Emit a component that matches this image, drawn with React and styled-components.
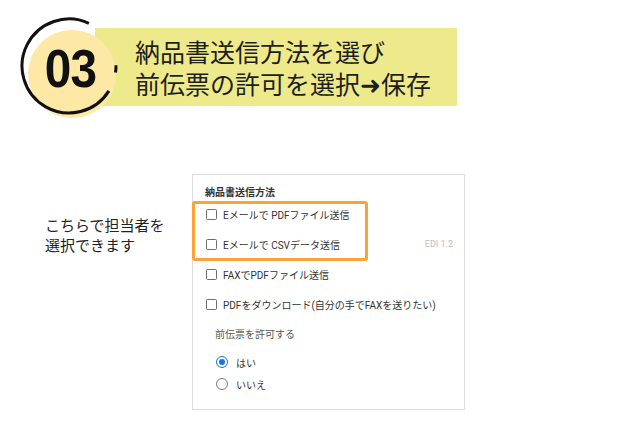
import styled, { createGlobalStyle } from "styled-components"

const GlobalStyle = createGlobalStyle`
    body {
        margin: 0;
        background: #fff;
        font-family: "Noto Sans CJK JP", "Noto Sans", sans-serif;
        color: #222;
    }
`

const App = () => {
    return (
        <Page>
            <GlobalStyle />
            <Header>
                <Badge>
                    <svg width="104" height="106" viewBox="0 0 104 106">
                        <circle cx="54" cy="59" r="44" fill="#fde8a6" />
                        <path d="M90.9 75.9 A47 47 0 1 1 70.9 8.4" fill="none" stroke="#111" strokeWidth="3" />
                        <path d="M98 50.2 A47 47 0 0 1 97.5 57.5" fill="none" stroke="#111" strokeWidth="3" />
                    </svg>
                    <Number>03</Number>
                </Badge>
                <Band>
                    納品書送信方法を選び<br />
                    前伝票の許可を選択➜保存
                </Band>
            </Header>
            <Body>
                <Note>
                    こちらで担当者を<br />
                    選択できます
                </Note>
                <Card>
                    <Highlight />
                    <Heading>納品書送信方法</Heading>
                    <Option>
                        <Checkbox />
                        <Label>Eメールで PDFファイル送信</Label>
                    </Option>
                    <Option>
                        <Checkbox />
                        <Label>Eメールで CSVデータ送信</Label>
                        <Tag>EDI 1.2</Tag>
                    </Option>
                    <Option>
                        <Checkbox />
                        <Label>FAXでPDFファイル送信</Label>
                    </Option>
                    <Option>
                        <Checkbox />
                        <Label>PDFをダウンロード(自分の手でFAXを送りたい)</Label>
                    </Option>
                    <SubLabel>前伝票を許可する</SubLabel>
                    <RadioRow>
                        <Radio checked />
                        <Label>はい</Label>
                    </RadioRow>
                    <RadioRow>
                        <Radio />
                        <Label>いいえ</Label>
                    </RadioRow>
                </Card>
            </Body>
        </Page>
    )
}

export default App

const Page = styled.div`
    width: 631px;
    height: 429px;
    overflow: hidden;
`
const Header = styled.div`
    display: flex;
    align-items: flex-start;
    margin-top: 15px;
    padding-left: 18px;
`
const Badge = styled.div`
    position: relative;
    z-index: 1;
    display: grid;
    place-items: center;
    width: 104px;
    height: 106px;
    flex-shrink: 0;
    & > * {
        grid-area: 1 / 1;
    }
`
const Number = styled.div`
    font-family: "Liberation Sans", Arial, sans-serif;
    font-weight: 700;
    font-size: 53px;
    line-height: 1;
    color: #111;
    transform: scaleX(0.9);
    letter-spacing: -1px;
`
const Band = styled.div`
    box-sizing: border-box;
    width: 362px;
    height: 78px;
    margin-top: 13px;
    margin-left: -27px;
    padding: 7px 0 0 40px;
    background: #eeea8b;
    font-size: 25px;
    line-height: 32px;
    color: #1e1e1e;
    white-space: nowrap;
`
const Body = styled.div`
    display: flex;
    margin-top: 53px;
    padding-left: 45px;
`
const Note = styled.div`
    width: 147px;
    margin-top: 41px;
    font-size: 15px;
    line-height: 20px;
    color: #222;
`
const Card = styled.div`
    position: relative;
    box-sizing: border-box;
    width: 273px;
    height: 236px;
    padding: 10px 11px 0 12px;
    border: 1px solid #dcdcdc;
    font-family: "Roboto", "Noto Sans CJK JP", sans-serif;
`
const Highlight = styled.div`
    position: absolute;
    left: -1px;
    top: 26px;
    width: 176px;
    height: 60px;
    box-sizing: border-box;
    border: 3px solid #f8a437;
    border-radius: 3px;
`
const Heading = styled.div`
    font-family: "Noto Sans CJK JP", sans-serif;
    font-size: 10px;
    font-weight: 700;
    line-height: 14px;
    color: #333;
`
const Option = styled.div`
    display: flex;
    align-items: center;
    height: 30px;
    padding-left: 1px;
`
const Checkbox = styled.span`
    box-sizing: border-box;
    width: 11px;
    height: 11px;
    border: 1.3px solid #6e6e6e;
    border-radius: 1.5px;
    flex-shrink: 0;
`
const Label = styled.span`
    margin-left: 6px;
    font-size: 10px;
    color: #333;
    white-space: nowrap;
`
const Tag = styled.span`
    margin-left: auto;
    font-size: 9px;
    color: #bdbdbd;
`
const SubLabel = styled.div`
    height: 32px;
    line-height: 32px;
    padding-left: 10px;
    font-size: 10px;
    color: #555;
`
const RadioRow = styled.div`
    display: flex;
    align-items: center;
    height: 22px;
    padding-left: 11px;
    ${Label} {
        margin-left: 8px;
    }
`
const Radio = styled.span`
    position: relative;
    box-sizing: border-box;
    width: 12px;
    height: 12px;
    border-radius: 50%;
    flex-shrink: 0;
    border: 1.3px solid ${p => p.checked ? "#1a73e8" : "#777"};
    &::after {
        content: "";
        display: ${p => p.checked ? "block" : "none"};
        position: absolute;
        inset: 2px;
        border-radius: 50%;
        background: #1a73e8;
    }
`
